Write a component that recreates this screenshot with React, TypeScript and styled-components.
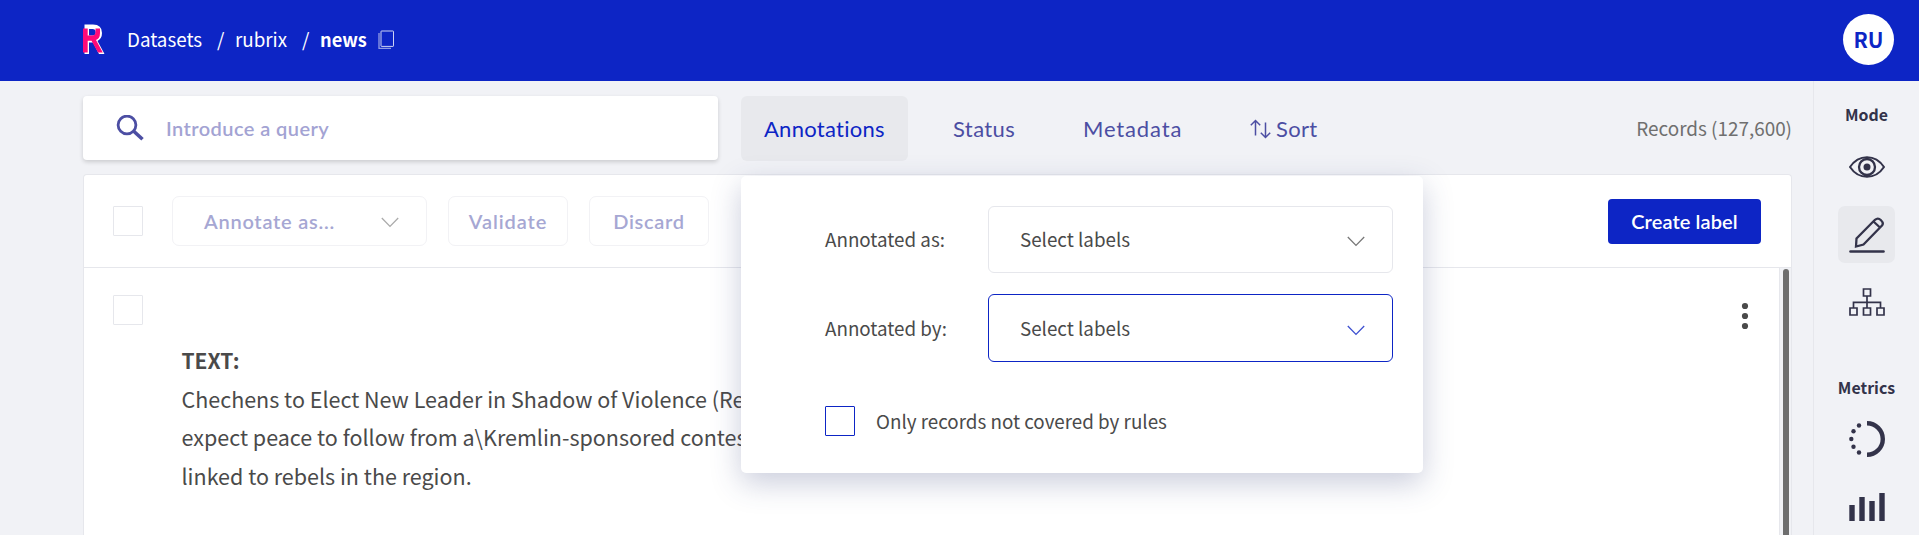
import React from 'react';
import styled, { createGlobalStyle, css } from 'styled-components';

const sans = `'Noto Sans CJK SC', 'Noto Sans', sans-serif`;
const display = `Lato, 'Open Sans', sans-serif`;
const blue = '#0d25c5';
const violet = '#4c4ea3';

const Global = createGlobalStyle`
  * { box-sizing: border-box; }
  body { margin: 0; background: #f1f2f6; overflow: hidden; font-family: ${sans}; color: #4a4a4a; font-variant-ligatures: none; }
`;

const Page = styled.div`
  height: 535px;
  display: flex;
  flex-direction: column;
  overflow: hidden;
`;

const Header = styled.header`
  height: 81px;
  flex: none;
  background: ${blue};
  color: #fff;
  display: flex;
  align-items: center;
  padding: 0 25px 2px 83px;
`;

const Crumbs = styled.nav`
  display: flex;
  align-items: center;
  flex: 1;
  margin-left: 22px;
  font-size: 18.8px;
  line-height: 26px;
  white-space: pre;
`;

const Crumb = styled.span<{ $w: number; $bold?: boolean }>`
  width: ${p => p.$w}px;
  margin-bottom: 2px;
  font-weight: ${p => (p.$bold ? 700 : 400)};
  font-size: ${p => (p.$bold ? 18.2 : 18.8)}px;
`;

const Avatar = styled.div`
  width: 51px;
  height: 51px;
  border-radius: 50%;
  background: #fff;
  color: ${blue};
  font-weight: 700;
  font-size: 21px;
  line-height: 51px;
  text-align: center;
`;

const Body = styled.div`
  flex: 1;
  display: flex;
  min-height: 0;
`;

const Main = styled.main`
  width: 1813px;
  padding: 15px 21px 0 83px;
  display: flex;
  flex-direction: column;
`;

const FilterBar = styled.div`
  display: flex;
  align-items: center;
  height: 65px;
  flex: none;
`;

const Search = styled.div`
  width: 635px;
  height: 64px;
  margin: 0 23px 1px 0;
  border-radius: 4px;
  background: #fff;
  box-shadow: 0 2px 4px rgba(0, 0, 0, 0.16);
  display: flex;
  align-items: center;
  padding-left: 33px;
  font: 600 20px/26px ${display};
  letter-spacing: 0.42px;
  color: #a3a3d3;
  svg { margin: 0 22px 1px 0; }
`;

const Tab = styled.button<{ $w: number; $track: number; $active?: boolean }>`
  width: ${p => p.$w}px;
  height: 65px;
  border: 0;
  border-radius: 6px;
  padding: 0 0 0 23px;
  display: flex;
  align-items: center;
  gap: 5px;
  font: 400 22px/28px ${display};
  letter-spacing: ${p => p.$track}px;
  font-variant-ligatures: none;
  background: ${p => (p.$active ? '#e8e9ed' : 'transparent')};
  color: ${p => (p.$active ? blue : violet)};
  ${p => p.$active && css`margin-right: 22px;`}
`;

const Records = styled.div`
  margin-left: auto;
  padding-bottom: 2px;
  font-size: 18.9px;
  color: #6f6f6f;
`;

const Panel = styled.section`
  position: relative;
  flex: 1;
  min-height: 0;
  margin: 13px 0 0 0;
  border: 1px solid #e6e7ec;
  border-bottom: 0;
  border-radius: 4px 4px 0 0;
  background: #fff;
  display: flex;
  flex-direction: column;
`;

const Toolbar = styled.div`
  height: 93px;
  flex: none;
  border-bottom: 1px solid #e6e7ec;
  display: flex;
  align-items: center;
  padding: 0 30px 0 29px;
`;

const Checkbox = styled.span<{ $active?: boolean }>`
  display: block;
  flex: none;
  width: 30px;
  height: 30px;
  border: 1px solid ${p => (p.$active ? blue : '#e6e7ec')};
  border-radius: 1px;
`;

const Ghost = styled.button<{ $w: number; $left: number; $track: number; $wide?: boolean }>`
  width: ${p => p.$w}px;
  height: 50px;
  margin-left: ${p => p.$left}px;
  border: 1px solid #f2f2f5;
  border-radius: 7px;
  background: #fff;
  color: #a6a7d3;
  font: 600 20px/26px ${display};
  letter-spacing: ${p => p.$track}px;
  display: flex;
  align-items: center;
  justify-content: center;
  padding: 0;
  ${p => p.$wide && css`justify-content: space-between; padding: 0 27px 0 31px; svg { margin-top: 3px; }`}
`;

const Primary = styled.button`
  width: 153px;
  height: 45px;
  margin-left: auto;
  border: 0;
  border-radius: 4px;
  padding: 0;
  background: ${blue};
  color: #fff;
  font: 600 20px/26px ${display};
  letter-spacing: 0.1px;
`;

const Record = styled.div`
  flex: 1;
  display: flex;
  min-height: 0;
`;

const RecordContent = styled.article`
  flex: 1;
  border-right: 1px solid #e6e7ec;
  display: flex;
  padding: 27px 28px 0 29px;
`;

const Copy = styled.div`
  flex: 1;
  margin: 46px 0 0 38.5px;
  font-size: 21.5px;
  line-height: 38.5px;
  white-space: pre;
  b { font-size: 21px; }
`;

const Track = styled.div`
  width: 11px;
  padding: 1px 2px 0 3px;
  background: #f1f2f6;
`;

const Thumb = styled.div`
  height: 300px;
  border-radius: 3px 3px 0 0;
  background: #6e6e6e;
`;

const Popup = styled.div`
  position: absolute;
  left: 657px;
  top: 1px;
  width: 682px;
  height: 297px;
  border-radius: 5px;
  background: #fff;
  box-shadow: 0 10px 30px rgba(50, 60, 120, 0.26);
  padding: 30px 30px 0 84px;
  font-size: 18.8px;
  line-height: 28px;
`;

const Field = styled.div<{ $gap: number }>`
  display: flex;
  align-items: center;
  justify-content: space-between;
  margin-bottom: ${p => p.$gap}px;
`;

const Caption = styled.span`
  padding-bottom: 1px;
`;

const Select = styled.div<{ $active?: boolean }>`
  width: 405px;
  height: ${p => (p.$active ? 68 : 67)}px;
  border: 1px solid ${p => (p.$active ? blue : '#e6e7ec')};
  border-radius: 6px;
  display: flex;
  align-items: center;
  justify-content: space-between;
  padding: 0 27px 0 31px;
  svg { margin-top: 4px; }
`;

const Rule = styled.label`
  display: flex;
  align-items: center;
  gap: 21px;
`;

const Aside = styled.aside`
  flex: 1;
  border-left: 1px solid #e6e7ec;
  display: flex;
  flex-direction: column;
  align-items: center;
  color: #33334a;
  padding: 20px 0 0 0;
`;

const Title = styled.h2<{ $top?: number }>`
  margin: ${p => p.$top || 0}px 0 0;
  font-size: 15.9px;
  line-height: 28px;
  font-weight: 700;
`;

const Tool = styled.button<{ $top: number; $active?: boolean }>`
  width: 57px;
  height: 57px;
  border: 0;
  border-radius: 7px;
  padding: 0;
  margin-top: ${p => p.$top}px;
  flex: none;
  color: inherit;
  background: ${p => (p.$active ? '#e8e9ed' : 'transparent')};
  display: flex;
  align-items: center;
  justify-content: center;
`;

const Chevron = ({ color }: { color: string }) => (
  <svg width="18" height="11" viewBox="0 0 18 11" fill="none" stroke={color} strokeWidth="1.3">
    <path d="M.8 1 9 9.4 17.2 1" />
  </svg>
);

export default function App() {
  return (
    <Page>
      <Global />
      <Header>
        <svg width="22" height="31" viewBox="0 0 22 31">
          <path d="M1.500.500H10Q19 .500 19 9q0 5.500-4.500 8L21.500 30H16L10 18.500H6V30H1.500Z" fill="#fff" />
          <path d="M6 5h3.500Q12.700 5 12.700 8.200T9.500 11.500H6Z" fill={blue} />
          <path d="M0 4.500H4.700V11.500H9Q12.500 11.500 12.500 8V4.500H17V9Q17 14.500 13 16L19.800 28.500H15L8.500 16.800H4.700V28.500H0Z" fill="#ff0a78" />
        </svg>
        <Crumbs>
          <Crumb $w={90}>Datasets</Crumb>
          <Crumb $w={18}>/</Crumb>
          <Crumb $w={67}>rubrix</Crumb>
          <Crumb $w={18}>/</Crumb>
          <Crumb $w={58} $bold>news</Crumb>
          <svg width="17" height="20" viewBox="0 0 17 20" fill="none" stroke="#fff">
            <rect x="3" y="1" width="12.5" height="15.4" rx=".6" opacity=".8" />
            <path d="M1 3v15.3h12" opacity=".55" strokeWidth="1.3" />
          </svg>
        </Crumbs>
        <Avatar>RU</Avatar>
      </Header>
      <Body>
        <Main>
          <FilterBar>
            <Search>
              <svg width="28" height="26" viewBox="0 0 28 26" fill="none" stroke={violet}>
                <circle cx="11" cy="10" r="8.9" strokeWidth="2.8" />
                <path d="m17.500 16 9 8.300" strokeWidth="3.600" />
              </svg>
              Introduce a query
            </Search>
            <Tab $w={167} $track={0.27} $active>Annotations</Tab>
            <Tab $w={130} $track={0.4}>Status</Tab>
            <Tab $w={167} $track={0.85}>Metadata</Tab>
            <Tab $w={110} $track={0.3}>
              <svg width="21" height="20" viewBox="0 0 21 20" fill="none" stroke="currentColor" strokeWidth="1.5">
                <path d="M5.5 16.500V2M.8 6.200 5.500 1.500l4.700 4.700M15.500 3.500V18M10.800 13.800l4.700 4.700 4.700-4.700" />
              </svg>
              Sort
            </Tab>
            <Records>Records (127,600)</Records>
          </FilterBar>
          <Panel>
            <Toolbar>
              <Checkbox />
              <Ghost $w={255} $left={29} $track={0.75} $wide>Annotate as...<Chevron color="#aaa" /></Ghost>
              <Ghost $w={120} $left={21} $track={0.9}>Validate</Ghost>
              <Ghost $w={120} $left={21} $track={0.7}>Discard</Ghost>
              <Primary>Create label</Primary>
            </Toolbar>
            <Record>
              <RecordContent>
                <Checkbox />
                <Copy>
                  <b>TEXT:</b>{'\n'}
                  Chechens to Elect New Leader in Shadow of Violence (Reuters) Reuters - Voters{'\n'}
                  expect peace to follow from a\Kremlin-sponsored contest to replace a leader{'\n'}
                  linked to rebels in the region.
                </Copy>
                <svg width="12" height="40" viewBox="0 0 12 40" fill="#4a4a4a">
                  <circle cx="6" cy="11" r="3.100" /><circle cx="6" cy="21" r="3.100" /><circle cx="6" cy="31" r="3.100" />
                </svg>
              </RecordContent>
              <Track><Thumb /></Track>
            </Record>
            <Popup>
              <Field $gap={21}><Caption>Annotated as:</Caption><Select><Caption>Select labels</Caption><Chevron color="#777" /></Select></Field>
              <Field $gap={44}><Caption>Annotated by:</Caption><Select $active><Caption>Select labels</Caption><Chevron color="#3c4fd0" /></Select></Field>
              <Rule><Checkbox $active /><Caption>Only records not covered by rules</Caption></Rule>
            </Popup>
          </Panel>
        </Main>
        <Aside>
          <Title>Mode</Title>
          <Tool $top={9}>
            <svg width="36" height="22" viewBox="0 0 36 22" fill="none" stroke="currentColor" strokeWidth="2">
              <path d="M1 11C5 5 11 1.200 18 1.200S31 5 35 11C31 17 25 20.800 18 20.800S5 17 1 11Z" />
              <circle cx="18" cy="11" r="8" strokeWidth="2.300" />
              <circle cx="18" cy="11" r="3.500" fill="currentColor" stroke="none" />
            </svg>
          </Tool>
          <Tool $top={11} $active>
            <svg width="36" height="36" viewBox="0 0 36 36" fill="none" stroke="currentColor" strokeWidth="2.300">
              <path d="M7 29.500 7.500 21.500 26 2.800Q29 .2 32 3.200T33 8.500L14.500 27.500ZM24.500 4.500 31.500 11" />
              <path d="M1.500 34.500h33" strokeWidth="2.600" strokeLinecap="round" />
            </svg>
          </Tool>
          <Tool $top={10}>
            <svg width="36" height="28" viewBox="0 0 36 28" fill="none" stroke="currentColor" strokeWidth="1.700">
              <path d="M14.500 1h7v7h-7zM1 20h7v7H1zM14.500 20h7v7h-7zM28 20h7v7h-7zM18 8v12M4.500 20v-5.700h27V20" />
            </svg>
          </Tool>
          <Title $top={44}>Metrics</Title>
          <Tool $top={8}>
            <svg width="36" height="36" viewBox="0 0 36 36" fill="none">
              <path d="M18 2.200a15.800 15.800 0 0 1 0 31.600" stroke="currentColor" strokeWidth="4.400" />
              <g fill="currentColor">
                <circle cx="10" cy="4.500" r="2.200" /><circle cx="4.500" cy="10.200" r="2.200" /><circle cx="2.300" cy="18" r="2.200" /><circle cx="4.500" cy="25.800" r="2.200" /><circle cx="10" cy="31.500" r="2.200" />
              </g>
            </svg>
          </Tool>
          <Tool $top={11}>
            <svg width="36" height="28" viewBox="0 0 36 28" fill="currentColor">
              <path d="M.3 12h5.400v16H.3zM10.300 4h5.400v24h-5.400zM20.300 8h5.400v20h-5.400zM30.300 0h5.400v28h-5.400z" />
            </svg>
          </Tool>
        </Aside>
      </Body>
    </Page>
  );
}
